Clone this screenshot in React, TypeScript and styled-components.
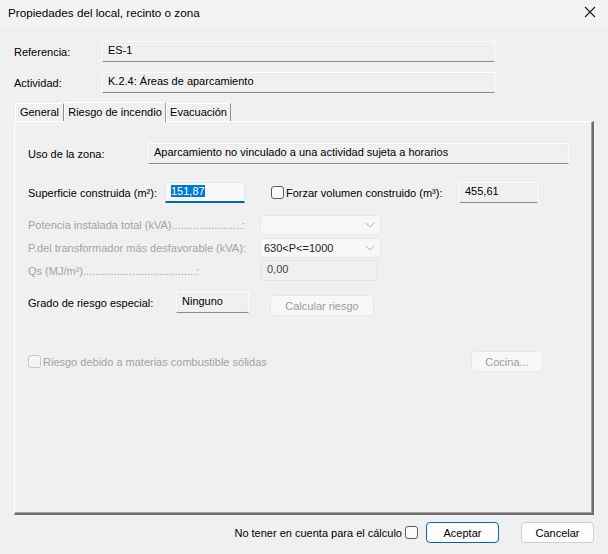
import React from 'react'
import styled, { createGlobalStyle } from 'styled-components'

const GlobalStyle = createGlobalStyle`
  html, body {
    margin: 0;
    padding: 0;
    background: #f0f0f0;
  }
  body {
    font-family: "Liberation Sans", Arial, sans-serif;
    font-size: 11px;
    color: #000;
  }
`

const Window = styled.div`
  width: 608px;
  height: 554px;
  background: #f0f0f0;
  display: flex;
  flex-direction: column;
  overflow: hidden;
`

const TitleBar = styled.div`
  height: 26px;
  flex: none;
  background: #f3f3f3;
  display: flex;
  align-items: center;
  justify-content: space-between;
  padding: 0 12px 2px 8px;
  box-sizing: border-box;
  font-size: 11.7px;
`

const Body = styled.div`
  flex: 1;
  padding: 15px 14px 0 14px;
  display: flex;
  flex-direction: column;
`

const FieldRow = styled.div<{ $top?: number }>`
  display: flex;
  align-items: center;
  margin-top: ${(p) => p.$top ?? 0}px;
`

const Label = styled.div<{ $width?: number; $disabled?: boolean }>`
  width: ${(p) => (p.$width ? `${p.$width}px` : 'auto')};
  flex: none;
  white-space: nowrap;
  color: ${(p) => (p.$disabled ? '#a3a3a3' : '#000')};
`

const ReadBox = styled.div<{ $width: number; $ml?: number }>`
  width: ${(p) => p.$width}px;
  height: 21px;
  margin-left: ${(p) => p.$ml ?? 0}px;
  box-sizing: border-box;
  background: #f0f0f0;
  border: 1px solid #fcfcfc;
  border-bottom-color: #8c8c8c;
  box-shadow: inset 0 0 0 1px #ececec;
  padding: 2px 0 0 5px;
  white-space: nowrap;
  overflow: hidden;
`

const Tabs = styled.div`
  display: flex;
  align-items: flex-end;
  margin-top: 8px;
  padding-left: 1px;
  height: 20px;
`

const Tab = styled.div<{ $active?: boolean; $width: number }>`
  width: ${(p) => p.$width}px;
  height: ${(p) => (p.$active ? 20 : 18)}px;
  box-sizing: border-box;
  padding-top: ${(p) => (p.$active ? 3 : 2)}px;
  text-align: center;
  border-top: 1px solid #fff;
  border-left: 1px solid #fff;
  border-right: 1px solid ${(p) => (p.$active ? '#a0a0a0' : '#8e8e8e')};
  background: #f0f0f0;
  white-space: nowrap;
  position: relative;
  z-index: ${(p) => (p.$active ? 2 : 1)};
  margin-bottom: ${(p) => (p.$active ? -1 : 0)}px;
`

const Panel = styled.div`
  width: 580px;
  height: 394px;
  box-sizing: border-box;
  border-left: 1px solid #fff;
  border-top: 1px solid #fff;
  border-right: 2px solid #6e6e6e;
  border-bottom: 2px solid #6e6e6e;
  box-shadow: inset -1px -1px 0 #a0a0a0;
  padding: 21px 0 0 13px;
  display: flex;
  flex-direction: column;
`

const Input = styled.div`
  width: 80px;
  height: 21px;
  box-sizing: border-box;
  margin-left: 8px;
  background: #f9f9f9;
  border: 1px solid #e6e6e6;
  border-bottom: 2px solid #0067c0;
  padding: 2px 0 0 5px;
`

const Selected = styled.span`
  background: #0078d7;
  color: #fff;
`

const Check = styled.span<{ $disabled?: boolean }>`
  width: 13px;
  height: 13px;
  box-sizing: border-box;
  border: 1px solid ${(p) => (p.$disabled ? '#c8c8c8' : '#5c5c5c')};
  border-radius: 3px;
  background: ${(p) => (p.$disabled ? '#f5f5f5' : '#fbfbfb')};
  flex: none;
  margin-right: 2px;
`

const Select = styled.div`
  width: 121px;
  height: 20px;
  box-sizing: border-box;
  background: #f7f7f7;
  border: 1px solid #e8e8e8;
  border-radius: 3px;
  display: flex;
  align-items: center;
  justify-content: space-between;
  padding: 0 5px 0 3px;
  color: #222;
`

const DisabledBox = styled.div`
  width: 117px;
  height: 21px;
  box-sizing: border-box;
  margin-left: 1px;
  background: #f0f0f0;
  border: 1px solid #e4e4e4;
  padding: 2px 0 0 5px;
  color: #444;
`

const Button = styled.div<{ $variant?: 'primary' | 'disabled' | 'normal'; $width: number }>`
  width: ${(p) => p.$width}px;
  height: 21px;
  box-sizing: border-box;
  border-radius: 4px;
  display: flex;
  align-items: center;
  justify-content: center;
  background: ${(p) => (p.$variant === 'disabled' ? '#f7f7f7' : '#fdfdfd')};
  border: 1px solid
    ${(p) => (p.$variant === 'primary' ? '#0067c0' : p.$variant === 'disabled' ? '#e8e8e8' : '#d0d0d0')};
  color: ${(p) => (p.$variant === 'disabled' ? '#9d9d9d' : '#000')};
`

const Footer = styled.div`
  display: flex;
  align-items: center;
  justify-content: flex-end;
  padding: 7px 0 0 0;
`

function Chevron() {
  return (
    <svg width='10' height='6' viewBox='0 0 10 6'>
      <path d='M1 1l4 4 4-4' fill='none' stroke='#b5b5b5' strokeWidth='1' />
    </svg>
  )
}

export default function App() {
  return (
    <Window>
      <GlobalStyle />
      <TitleBar>
        <span>Propiedades del local, recinto o zona</span>
        <svg width='12' height='12' viewBox='0 0 12 12'>
          <path d='M1 1l10 10M11 1L1 11' stroke='#1a1a1a' strokeWidth='1.1' />
        </svg>
      </TitleBar>
      <Body>
        <FieldRow>
          <Label $width={88}>Referencia:</Label>
          <ReadBox $width={393}>ES-1</ReadBox>
        </FieldRow>
        <FieldRow $top={10}>
          <Label $width={88}>Actividad:</Label>
          <ReadBox $width={393}>K.2.4: Áreas de aparcamiento</ReadBox>
        </FieldRow>
        <Tabs>
          <Tab $width={49}>General</Tab>
          <Tab $width={102} $active>
            Riesgo de incendio
          </Tab>
          <Tab $width={65}>Evacuación</Tab>
        </Tabs>
        <Panel>
          <FieldRow>
            <Label $width={120}>Uso de la zona:</Label>
            <ReadBox $width={421}>Aparcamiento no vinculado a una actividad sujeta a horarios</ReadBox>
          </FieldRow>
          <FieldRow $top={18}>
            <Label $width={129}>Superficie construida (m²):</Label>
            <Input>
              <Selected>151,87</Selected>
            </Input>
            <Check style={{ marginLeft: 26 }} />
            <Label $width={173}>Forzar volumen construido (m³):</Label>
            <ReadBox $width={79}>455,61</ReadBox>
          </FieldRow>
          <FieldRow $top={12}>
            <Label $width={232} $disabled>
              Potencia instalada total (kVA).......................:
            </Label>
            <Select>
              <span />
              <Chevron />
            </Select>
          </FieldRow>
          <FieldRow $top={3}>
            <Label $width={232} $disabled>
              P.del transformador más desfavorable (kVA):
            </Label>
            <Select>
              <span>630&lt;P&lt;=1000</span>
              <Chevron />
            </Select>
          </FieldRow>
          <FieldRow $top={2}>
            <Label $width={232} $disabled>
              Qs (MJ/m²).....................................:
            </Label>
            <DisabledBox>0,00</DisabledBox>
          </FieldRow>
          <FieldRow $top={8}>
            <Label $width={148}>Grado de riesgo especial:</Label>
            <ReadBox $width={73}>Ninguno</ReadBox>
            <Button $variant='disabled' $width={104} style={{ marginLeft: 21, marginTop: 6 }}>
              Calcular riesgo
            </Button>
          </FieldRow>
          <FieldRow $top={35}>
            <Check $disabled />
            <Label $width={428} $disabled>
              Riesgo debido a materias combustible sólidas
            </Label>
            <Button $variant='disabled' $width={72}>
              Cocina...
            </Button>
          </FieldRow>
        </Panel>
        <Footer>
          <Label>No tener en cuenta para el cálculo</Label>
          <Check style={{ marginLeft: 3, marginRight: 8 }} />
          <Button $variant='primary' $width={73}>
            Aceptar
          </Button>
          <Button $width={73} style={{ marginLeft: 22 }}>
            Cancelar
          </Button>
        </Footer>
      </Body>
    </Window>
  )
}
